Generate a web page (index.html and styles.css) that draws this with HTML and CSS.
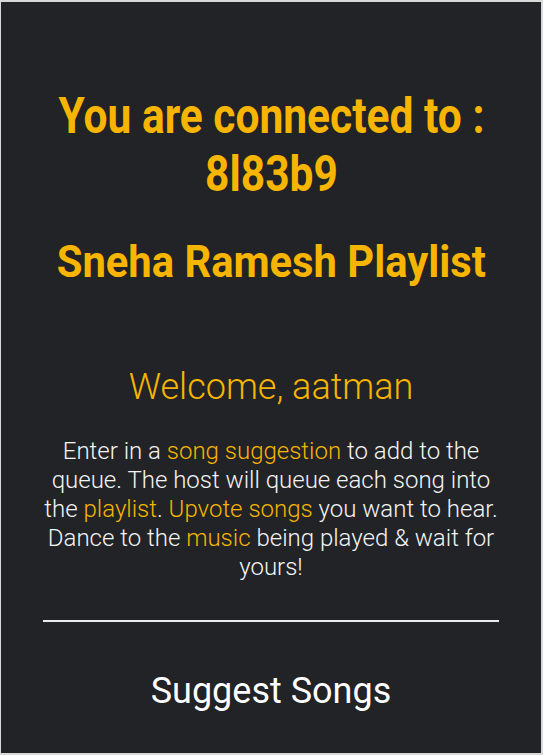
FILE: index.html
```html
<!DOCTYPE html>
<html lang="en">
<head>
<meta charset="utf-8">
<title>Playlist</title>
<link rel="stylesheet" href="styles.css">
</head>
<body>
<main class="card">
  <h1 class="connected">You are connected to :<br>8l83b9</h1>
  <h2 class="playlist">Sneha Ramesh Playlist</h2>
  <h3 class="welcome">Welcome, aatman</h3>
  <p class="intro">Enter in a <span class="hl">song suggestion</span> to add to the<br>queue. The host will queue each song into<br>the <span class="hl">playlist</span>. <span class="hl">Upvote songs</span> you want to hear.<br>Dance to the <span class="hl">music</span> being played &amp; wait for<br>yours!</p>
  <hr class="divider">
  <h3 class="suggest">Suggest Songs</h3>
</main>
</body>
</html>
```

FILE: styles.css
```css
html, body {
  margin: 0;
  padding: 0;
  background: #ffffff;
}
body {
  font-family: Roboto, "Liberation Sans", sans-serif;
}
.card {
  box-sizing: border-box;
  height: 755px;
  overflow: hidden;
  background: #212326;
  border-style: solid;
  border-color: #d9d9d9;
  border-width: 2px 2px 2px 1px;
  padding: 85px 42px 0 42px;
  text-align: center;
  display: flex;
  flex-direction: column;
  align-items: center;
}
.connected {
  margin: 0;
  width: max-content;
  white-space: nowrap;
  font-size: 50px;
  line-height: 58px;
  font-weight: 700;
  color: #f7b500;
  transform: scaleX(0.85);
}
.playlist {
  margin: 33px 0 0;
  width: max-content;
  white-space: nowrap;
  font-size: 44px;
  line-height: 52px;
  font-weight: 700;
  color: #f7b500;
  transform: scaleX(0.948);
}
.welcome {
  margin: 78px 0 0;
  font-size: 36px;
  line-height: 42px;
  font-weight: 300;
  color: #f7b500;
}
.intro {
  margin: 29px 0 0;
  width: max-content;
  font-size: 24px;
  line-height: 29px;
  font-weight: 300;
  color: #f4f4f4;
}
.hl {
  color: #f7b500;
}
.divider {
  align-self: stretch;
  margin: 38px 0 0;
  border: 0;
  height: 2px;
  background: #ececec;
}
.suggest {
  margin: 47px 0 0;
  font-size: 36px;
  line-height: 44px;
  font-weight: 400;
  color: #ffffff;
}
```
